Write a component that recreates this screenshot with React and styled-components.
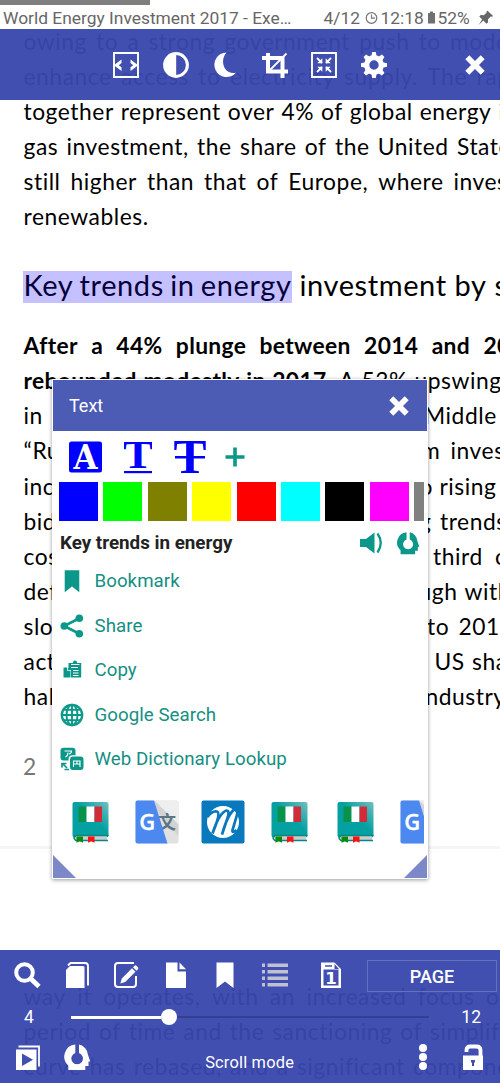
import React from 'react';
import styled, { createGlobalStyle } from 'styled-components';

const TEAL = '#0b988a';

const GlobalStyle = createGlobalStyle`
  * { box-sizing: border-box; }
  body { margin: 0; background: #fff; font-family: Roboto, sans-serif; overflow: hidden; }
  svg { display: block; flex: none; }
`;

const Screen = styled.main`
  position: relative;
  width: 500px;
  height: 1083px;
  overflow: hidden;
  background: #fff;
`;

/* Status strip */
const StatusBar = styled.header`
  position: relative;
  z-index: 1;
  height: 29px;
  background: #fff;
  color: #666;
`;
const ReadingProgress = styled.div`
  width: 150px;
  height: 5px;
  background: #7f7f7f;
`;
const StatusRow = styled.div`
  display: flex;
  align-items: center;
  height: 24px;
  padding: 2px 0 0 3px;
  font-size: 17.4px;
  white-space: nowrap;
`;
const StatusTitle = styled.span`
  flex: none;
  width: 320.5px;
`;
const StatusItem = styled.span`
  flex: none;
  width: ${(p) => p.$w}px;
`;

/* Document page */
const Page = styled.article`
  margin-top: -5.4px;
  height: 825px;
  border-bottom: 3px solid #f5f5f5;
  font-family: Lato, 'Open Sans', sans-serif;
  font-size: 22.8px;
  letter-spacing: 0.55px;
  color: #000;
  overflow: hidden;
`;
const NextPage = styled.article`
  padding-top: 130px;
  font-family: Lato, 'Open Sans', sans-serif;
  font-size: 22.8px;
  letter-spacing: 0.55px;
`;
const Row = styled.div`
  display: flex;
  height: 35.1px;
  line-height: 35.1px;
  padding-left: 23.5px;
  white-space: nowrap;
`;
const Words = styled.div`
  display: flex;
  flex: none;
  justify-content: space-between;
  width: ${(p) => p.$w}px;
`;
const Word = styled.span`
  font-weight: ${(p) => (p.$bold ? 700 : 400)};
  letter-spacing: ${(p) => (p.$bold ? 0.35 : 0.55)}px;
`;
const EdgeWord = styled(Word)`
  width: 0;
`;
const Heading = styled.h2`
  display: flex;
  height: 32px;
  margin: 37px 0 25px;
  padding-left: 22.5px;
  font-weight: 400;
  font-size: 29px;
  line-height: 28.5px;
  letter-spacing: 0.6px;
  white-space: nowrap;
`;
const Highlight = styled.mark`
  display: flex;
  justify-content: space-between;
  width: 269px;
  padding: 0 0 0 1px;
  background: #c5c0ff;
  color: #06003a;
`;
const HeadingRest = styled.span`
  display: flex;
  justify-content: space-between;
  width: 203px;
  padding-left: 8px;
`;
const PageNumber = styled.div`
  padding: 38px 0 0 23px;
  color: #777;
`;

/* Floating bars */
const TopToolbar = styled.nav`
  position: absolute;
  z-index: 2;
  left: 0;
  top: 29px;
  width: 500px;
  height: 71px;
  display: flex;
  align-items: center;
  justify-content: space-between;
  padding: 0 13.5px 0 112px;
  background: rgba(56, 71, 172, 0.955);
`;
const ToolGroup = styled.div`
  display: flex;
  gap: 21.6px;
`;
const BottomPanel = styled.footer`
  position: absolute;
  z-index: 2;
  left: 0;
  bottom: 0;
  width: 500px;
  height: 133px;
  background: rgba(56, 71, 172, 0.955);
  color: #fff;
`;
const BottomTools = styled.div`
  display: flex;
  align-items: center;
  justify-content: space-between;
  height: 52px;
  padding: 0 3px 0 13px;
`;
const BottomIcons = styled(ToolGroup)`
  padding-bottom: 2px;
`;
const PageButton = styled.button`
  width: 130px;
  height: 32px;
  padding: 0;
  border: 1px solid #6571bd;
  background: transparent;
  color: #fff;
  font: 500 18px Roboto, sans-serif;
`;
const SeekRow = styled.div`
  display: flex;
  align-items: center;
  height: 30px;
  padding: 0 19px 0 24px;
  font-size: 17.5px;
`;
const PageLabel = styled.span`
  width: ${(p) => p.$w}px;
  text-align: ${(p) => p.$align || 'left'};
`;
const Track = styled.div`
  display: flex;
  align-items: center;
  width: 358px;
`;
const TrackDone = styled.div`
  width: 89.5px;
  height: 3px;
  background: #fff;
`;
const Thumb = styled.div`
  width: 16px;
  height: 16px;
  border-radius: 50%;
  background: #fff;
`;
const TrackLeft = styled.div`
  flex: 1;
  height: 2.5px;
  background: #343f8f;
`;
const ModeRow = styled.div`
  display: flex;
  align-items: flex-start;
  height: 51px;
  padding: 11px 13.5px 0 13.5px;
`;
const ModeLabel = styled.span`
  flex: 1;
  padding-top: 10px;
  text-align: center;
  font-size: 16.4px;
  letter-spacing: 0.2px;
`;
const Spaced = styled.span`
  margin-left: ${(p) => p.$l || 0}px;
`;

/* Selection popup */
const Popup = styled.section`
  position: absolute;
  z-index: 3;
  left: 52px;
  top: 379px;
  width: 376px;
  height: 500px;
  padding: 1px;
  background: #fff;
  box-shadow: 0 1px 4px rgba(0, 0, 0, 0.4);
  display: flex;
  flex-direction: column;
`;
const PopupHeader = styled.div`
  display: flex;
  align-items: center;
  justify-content: space-between;
  flex: none;
  height: 51px;
  padding: 0 15.7px 0 16px;
  background: #4c5cb4;
  color: #fff;
  font-size: 18px;
`;
const StyleRow = styled.div`
  display: flex;
  align-items: center;
  height: 51px;
  padding-left: 16px;
`;
const SwatchRow = styled.div`
  display: flex;
  gap: 5.4px;
  width: 371px;
  height: 39px;
  padding-left: 6px;
  overflow: hidden;
`;
const Swatch = styled.span`
  flex: none;
  width: 39px;
  height: 39px;
  background: ${(p) => p.$color};
`;
const SelectionRow = styled.div`
  display: flex;
  align-items: center;
  height: 44px;
  padding: 0 7px 0 7px;
  color: #222;
  font-size: 18.8px;
  font-weight: 700;
`;
const SelectedText = styled.span`
  flex: 1;
`;
const ActionList = styled.ul`
  list-style: none;
  margin: -6px 0 0;
  padding: 0 0 0 7px;
`;
const Action = styled.li`
  display: flex;
  align-items: center;
  gap: 10.5px;
  height: 44.5px;
  color: #158f83;
  font-size: 18.7px;
  letter-spacing: 0.05px;
`;
const AppRow = styled.div`
  display: flex;
  gap: 22.2px;
  width: 371px;
  margin-top: 18px;
  padding-left: 16px;
  overflow: hidden;
`;
const Grips = styled.div`
  display: flex;
  justify-content: space-between;
  margin-top: auto;
`;
const Grip = styled.span`
  width: 23px;
  height: 23px;
  background: #7c88c7;
  clip-path: ${(p) => (p.$right ? 'polygon(100% 0, 100% 100%, 0 100%)' : 'polygon(0 0, 100% 100%, 0 100%)')};
`;

const Icon = ({ size = 28, w, h, box = 28, color = '#fff', children }) => (
  <svg width={w || size} height={h || size} viewBox={`0 0 ${w && h ? `${w} ${h}` : `${box} ${box}`}`} fill={color} color={color}>
    {children}
  </svg>
);

const CloseIcon = () => (
  <Icon size={24} box={24}>
    <path d="M4.300 4.300 19.700 19.700M19.700 4.300 4.300 19.700" stroke="#fff" strokeWidth="5.600" />
  </Icon>
);
const FitWidthIcon = () => (
  <Icon>
    <path d="M2 2h24v24H2z" fill="none" stroke="#fff" strokeWidth="1.900" />
    <path d="M9.500 8.500v3.600L6.800 14.200l2.700 2.100v3.600L2.800 14.900v-1.400zM18.500 8.500l6.700 5v1.400l-6.700 5v-3.600l2.700-2.100-2.700-2.100z" />
  </Icon>
);
const ContrastIcon = () => (
  <Icon>
    <circle cx="14" cy="14" r="11.400" fill="none" stroke="#fff" strokeWidth="3" />
    <path d="M14.200 2v24A12 12 0 0 1 14.200 2z" />
  </Icon>
);
const MoonIcon = () => (
  <Icon>
    <path d="M15.500 1.500A12.300 12.300 0 1 0 25 21.800C12.500 24.200 8.500 9 15.500 1.500z" />
  </Icon>
);
const CropIcon = () => (
  <Icon>
    <path d="M7 2v18.500h20M1 7h20.500v20" fill="none" stroke="#fff" strokeWidth="4" />
    <path d="M8 20 25.500 2.500" stroke="#fff" strokeWidth="1.800" />
  </Icon>
);
const ShrinkIcon = () => (
  <Icon>
    <path d="M2 2h24v24H2z" fill="none" stroke="#fff" strokeWidth="1.900" />
    <path d="M7 7l5 5M21 7l-5 5M7 21l5-5M21 21l-5-5" stroke="#fff" strokeWidth="1.800" />
    <path d="M12.300 7.300v5H7.300zM15.700 7.300v5h5zM12.300 20.700v-5h-5zM15.700 20.700v-5h5z" />
  </Icon>
);
const GearIcon = () => (
  <Icon>
    <circle cx="14" cy="14" r="7.300" fill="none" stroke="#fff" strokeWidth="5.200" />
    {[0, 45, 90, 135, 180, 225, 270, 315].map((a) => (
      <path key={a} d="M11.300 5.500 12.200 1h3.600l.9 4.500z" transform={`rotate(${a} 14 14)`} />
    ))}
  </Icon>
);

const SearchIcon = () => (
  <Icon>
    <circle cx="11.500" cy="11.500" r="8.300" fill="none" stroke="#fff" strokeWidth="4" />
    <path d="m17.500 17.500 8.500 8" stroke="#fff" strokeWidth="4.800" />
  </Icon>
);
const PagesIcon = () => (
  <Icon>
    <path d="M7 5h13q1.500 0 1.500 1.500V27H3V9z" />
    <path d="M5 4.500 7.500 2H22q3 0 3 3v19.500" fill="none" stroke="#fff" strokeWidth="1.900" />
  </Icon>
);
const EditIcon = () => (
  <Icon>
    <path d="M22 2H6Q3 2 3 5v18q0 3 3 3h15q3 0 3-3v-8" fill="none" stroke="#fff" strokeWidth="2" />
    <path d="M8.300 22.500l1.500-5L20 7.200l3.500 3.500L13.200 21zM21 6.200l1.500-1.500q1-.8 2 0l1.500 1.500q.8 1 0 2L24.500 9.700z" />
  </Icon>
);
const PageIcon = () => (
  <Icon>
    <path d="M4 1.500h11.500v9H24V27H4z" />
    <path d="M17.500 1.500 24 8.200h-6.500z" />
  </Icon>
);
const BookmarkIcon = ({ color, size }) => (
  <Icon color={color} size={size}>
    <path d="M5.500 1.500h17V27L14 20.500 5.500 27z" />
  </Icon>
);
const ListIcon = () => (
  <Icon color="#bfc1d3">
    <path d="M1 2.500h3v3.500H1zM6.500 2.500H27v3.500H6.500zM1 9h3v3.500H1zM6.500 9H27v3.500H6.500zM1 15.500h3V19H1zM6.500 15.500H27V19H6.500zM1 22h3v3.500H1zM6.500 22H27v3.500H6.500z" />
  </Icon>
);
const PageOneIcon = () => (
  <Icon>
    <path fillRule="evenodd" d="M4 1.500h13.500l6.500 6.500v19H4zM6.500 8.500v16h15v-16zM8 4.300v1.400h7V4.300zM17.500 3v5H22z" />
    <text x="14" y="22.500" textAnchor="middle" fontFamily="DejaVu Sans" fontWeight="700" fontSize="16.500">1</text>
  </Icon>
);
const SlidesIcon = () => (
  <Icon>
    <path fillRule="evenodd" d="M2 6.500h20.500V27H2zM8 10.500v12.500l11-6.200z" />
    <path d="M4.500 3.500H25v20" fill="none" stroke="#fff" strokeWidth="1.800" />
  </Icon>
);
const HeadphoneIcon = ({ color = '#fff', size = 28 }) => (
  <Icon color={color} size={size}>
    <path fillRule="evenodd" d="M12.300 1.600A12 12 0 0 0 5.300 22.500V27h17v-4h3.200v-4.500h1.800l-2.300-6.500A11.300 11.300 0 0 0 16 1.600V10a5.800 5.800 0 1 1-3.700 0z" />
  </Icon>
);
const DotsIcon = () => (
  <Icon>
    <circle cx="14" cy="5" r="4" />
    <circle cx="14" cy="14" r="4" />
    <circle cx="14" cy="23" r="4" />
  </Icon>
);
const UnlockIcon = () => (
  <Icon>
    <path d="M7.500 9V7q0-3.500 3.500-3.500h6.500q4 0 4 4V14" fill="none" stroke="#fff" strokeWidth="3.800" />
    <path fillRule="evenodd" d="M4 12.500h20V27H4zM12 17h4v2.500h-1V23h-2v-3.500h-1z" />
  </Icon>
);

const ClockIcon = () => (
  <Icon w={16} h={17} color="#777">
    <circle cx="6.500" cy="8" r="5.300" fill="none" stroke="#777" strokeWidth="1.200" />
    <path d="M6.500 4.500V8.200H10" fill="none" stroke="#777" strokeWidth="1.200" />
  </Icon>
);
const BatteryIcon = () => (
  <Icon w={11} h={16} color="#707070">
    <path d="M3 1.500h3V3H8v10.500H1V3h2z" />
  </Icon>
);
const PinIcon = () => (
  <Icon w={18} h={18} color="#666">
    <path d="m9.500 1.700 5.700 5.400-1.500.7-1-.2-2.800 2.900.2 2.800-1.700 1.500-3.100-3.200-4.700 4.500 3.500-5.700-2.800-3 1.500-1.300 3.100.2 2.800-2.900-.3-1z" />
  </Icon>
);

const LetterBoxIcon = () => (
  <svg width="33" height="32" viewBox="0 0 33 32">
    <rect width="33" height="31" y=".5" rx="2.500" fill="#00f" />
    <text x="16.500" y="27.500" textAnchor="middle" textLength="24" lengthAdjust="spacingAndGlyphs" fontFamily="DejaVu Serif" fontWeight="700" fontSize="34" fill="#fff">A</text>
  </svg>
);
const UnderlineIcon = () => (
  <svg width="28" height="34" viewBox="0 0 28 34">
    <text x="14" y="28" textAnchor="middle" textLength="30" lengthAdjust="spacingAndGlyphs" fontFamily="Liberation Serif" fontWeight="700" fontSize="41" fill="#00f">T</text>
    <path d="M0 31h28v2.200H0z" fill="#00f" />
  </svg>
);
const StrikeIcon = () => (
  <svg width="32" height="34" viewBox="0 0 32 34">
    <text x="16" y="33" textAnchor="middle" textLength="33" lengthAdjust="spacingAndGlyphs" fontFamily="Liberation Serif" fontWeight="700" fontSize="49" fill="#00f">T</text>
    <path d="M1 16h30v2.500H1z" fill="#00f" />
  </svg>
);
const PlusIcon = () => (
  <svg width="20" height="20" viewBox="0 0 20 20">
    <path d="M10 .5v19M.5 10h19" stroke={TEAL} strokeWidth="3.600" />
  </svg>
);
const SpeakerIcon = () => (
  <Icon w={23} h={22} color={TEAL}>
    <path d="M0 7h6l8.500-6.500v21L6 15H0z" />
    <path d="M17.500 1.500q6.500 9.500 0 19" fill="none" stroke={TEAL} strokeWidth="2.300" />
  </Icon>
);
const ShareIcon = () => (
  <Icon size={24} box={24} color={TEAL}>
    <path d="M19 4.500 4 12l15 7.500" fill="none" stroke={TEAL} strokeWidth="2.600" />
    <circle cx="19.300" cy="4.300" r="3.800" />
    <circle cx="4.300" cy="12" r="3.800" />
    <circle cx="19.300" cy="19.700" r="3.800" />
  </Icon>
);
const PasteIcon = () => (
  <Icon size={24} box={24} color={TEAL}>
    <path d="M8.500 5h4.300q0-2.500 2.200-2.500T17.200 5h4v14.500H11V12H8.500z" />
    <path d="M11 6.500h8.500" stroke="#fff" strokeWidth="1" />
    <path d="M11 9.500h7M13 12.500h5.500M13 15h5.500M13 17.500h5.500" stroke="#fff" strokeWidth="1.200" />
    <path d="M3.500 9.500h3.700v3.200h3.300v6.800h-7zM8 9.500l3 2.500H8z" />
  </Icon>
);
const GlobeIcon = () => (
  <Icon size={24} box={24} color={TEAL}>
    <circle cx="12" cy="12" r="10.200" fill="none" stroke={TEAL} strokeWidth="2.300" />
    <ellipse cx="12" cy="12" rx="5.500" ry="10.200" fill="none" stroke={TEAL} strokeWidth="1.900" />
    <path d="M12 1v22M1 12h22M3 6.800h18M3 17.200h18" stroke={TEAL} strokeWidth="1.900" />
  </Icon>
);
const DictionaryIcon = () => (
  <Icon size={24} box={24} color={TEAL}>
    <path d="M3.500.7h9q3 0 3 3v4.500h-3q-4 0-4 4v1.300h-5q-3 0-3-3v-6.800q0-3 3-3z" />
    <rect x="10" y="9.500" width="13.500" height="13.500" rx="3" />
    <path d="M4.500 4h7q0 2.500-2.500 3M8 5.500Q8 9 5.500 10M13.500 20v-6h6.500V20M13.500 17h6.500M17 14V17" fill="none" stroke="#fff" strokeWidth="1.100" />
    <path d="m2.500 16.500 4.500 4.500M2 20.500v-4h4.500M9 22.500H4.500" fill="none" stroke={TEAL} strokeWidth="1.700" />
  </Icon>
);

const ItalianDictionary = () => (
  <svg width="44" height="44" viewBox="1 0 44 44">
    <defs>
      <linearGradient id="cover" x1="0" y1="1" x2="1" y2="0">
        <stop offset=".55" stopColor="#05a0a2" />
        <stop offset="1" stopColor="#70bfc0" />
      </linearGradient>
    </defs>
    <rect x="4.500" y="2" width="36" height="35.500" rx="2" fill="url(#cover)" />
    <path d="M8 36h31v4.500H8q-3-2 0-4.500z" fill="#ccc" />
    <path d="M40.500 35.500H8q-4 2.500 0 5h32" fill="none" stroke="#078685" strokeWidth="1.500" />
    <path d="M10.500 6.500h8v15.500h-8z" fill="#09924a" />
    <path d="M18.500 6.500h8v15.500h-8z" fill="#fff" />
    <path d="M26.500 6.500h7.500v15.500h-7.500z" fill="#d12c38" />
    <path d="M8.500 36.500H15v6.300l-3.200-1.600-3.300 1.600z" fill="#0a8a0a" />
    <path d="M20 36.500h6.500v6.300l-3.200-1.600-3.300 1.600z" fill="#f11" />
  </svg>
);
const TranslateLogo = () => (
  <svg width="44" height="44" viewBox="0 0 44 44">
    <rect x=".5" y=".5" width="43" height="43" rx="2" fill="#e1e1e1" />
    <path d="m20 1 23.500 23.500V1z" fill="#eee" />
    <path d="m20 1 23.500 23.500V36L22 11z" fill="#d3d3d3" />
    <text x="23" y="28.500" fontFamily="Noto Sans CJK SC, sans-serif" fontWeight="700" fontSize="18" fill="#5b7684">文</text>
    <path d="M2.500.5h16.500l13.500 43h-30q-2 0-2-2v-39q0-2 2-2z" fill="#4b88ef" />
    <text x="4.300" y="29.500" fontFamily="Open Sans" fontWeight="600" fontSize="22" fill="#fff" stroke="#fff" strokeWidth=".3">G</text>
  </svg>
);
const MerriamLogo = () => (
  <svg width="44" height="44" viewBox="0 0 44 44">
    <rect x=".5" y=".5" width="43" height="43" rx="2" fill="#0879bd" />
    <circle cx="22" cy="22" r="16" fill="#fff" />
    <path d="M6.500 17Q11 10.500 16 11.500q3 1-.5 11.500l-4 10.500Q18 13 25.500 10.500q3.500 0 1 7.500L21 34.500Q27 13 34.500 8.500q3 0 1.500 6.500l-4.500 15q-.5 4 4 0" fill="none" stroke="#0879bd" strokeWidth="2.700" />
  </svg>
);

/* A justified text line: the last word begins at the given width and runs off the sheet. */
const Line = ({ text, w, bold = 0 }) => {
  const words = text.split(' ');
  return (
    <Row>
      <Words $w={w}>
        {words.map((word, i) => {
          const Tag = i === words.length - 1 ? EdgeWord : Word;
          return <Tag key={i} $bold={i < bold}>{word}</Tag>;
        })}
      </Words>
    </Row>
  );
};
/* A line interrupted by the popup: its start, then the words that resume at `at`. */
const SplitLine = ({ start, rest, at, w }) => (
  <Row>
    <Words $w={at - 23.5}><Word>{start}</Word></Words>
    <Words $w={w}>
      {rest.split(' ').map((word, i, all) => {
        const Tag = i && i === all.length - 1 ? EdgeWord : Word;
        return <Tag key={i}>{word}</Tag>;
      })}
    </Words>
  </Row>
);

const swatches = ['#0000ff', '#00ff00', '#808000', '#ffff00', '#ff0000', '#00ffff', '#000000', '#ff00ff', '#808080'];
const actions = [
  ['Bookmark', <BookmarkIcon color={TEAL} size={24} />],
  ['Share', <ShareIcon />],
  ['Copy', <PasteIcon />],
  ['Google Search', <GlobeIcon />],
  ['Web Dictionary Lookup', <DictionaryIcon />],
];

export default function App() {
  return (
    <Screen>
      <GlobalStyle />
      <StatusBar>
        <ReadingProgress />
        <StatusRow>
          <StatusTitle>World Energy Investment 2017 - Exe…</StatusTitle>
          <StatusItem $w={41}>4/12</StatusItem>
          <ClockIcon />
          <StatusItem $w={46}>12:18</StatusItem>
          <BatteryIcon />
          <StatusItem $w={40}>52%</StatusItem>
          <PinIcon />
        </StatusRow>
      </StatusBar>

      <Page>
        <Line text="owing to a strong government push to modernise" w={426.5} />
        <Line text="enhance access to electricity supply. The rapid" w={453} />
        <Line text="together represent over 4% of global energy in" w={475} />
        <Line text="gas investment, the share of the United States" w={433.5} />
        <Line text="still higher than that of Europe, where investment" w={430} />
        <Row>renewables.</Row>
        <Heading>
          <Highlight><span>Key</span><span>trends</span><span>in</span><span>energy</span></Highlight>
          <HeadingRest><span>investment</span><span>by</span><EdgeWord>sector</EdgeWord></HeadingRest>
        </Heading>
        <Line text="After a 44% plunge between 2014 and 2016" w={460} bold={8} />
        <Line text="rebounded modestly in 2017. A 53% upswing" w={391} bold={4} />
        <SplitLine start="in" rest="Middle East" at={424} w={82} />
        <SplitLine start="“Ru" rest="m investment" at={421} w={29.5} />
        <SplitLine start="inc" rest="o rising" at={419.5} w={20} />
        <SplitLine start="bid" rest="g trends" at={419} w={21} />
        <SplitLine start="cos" rest="third of" at={433} w={62} />
        <SplitLine start="def" rest="ugh with" at={418.5} w={46} />
        <SplitLine start="slo" rest="to 2015" at={427} w={31.5} />
        <SplitLine start="act" rest="US shale" at={434.5} w={37.5} />
        <SplitLine start="hal" rest="ndustry" at={425.5} w={80} />
        <PageNumber>2</PageNumber>
      </Page>
      <NextPage>
        <Line text="way it operates, with an increased focus on" w={462.5} />
        <Line text="period of time and the sanctioning of simplified" w={406.5} />
        <Line text="curve has rebased, and a significant component" w={389.5} />
      </NextPage>

      <TopToolbar>
        <ToolGroup>
          <FitWidthIcon /><ContrastIcon /><MoonIcon /><CropIcon /><ShrinkIcon /><GearIcon />
        </ToolGroup>
        <CloseIcon />
      </TopToolbar>

      <Popup>
        <PopupHeader>Text<CloseIcon /></PopupHeader>
        <StyleRow>
          <LetterBoxIcon />
          <Spaced $l={22}><UnderlineIcon /></Spaced>
          <Spaced $l={22}><StrikeIcon /></Spaced>
          <Spaced $l={19}><PlusIcon /></Spaced>
        </StyleRow>
        <SwatchRow>{swatches.map((c) => <Swatch key={c} $color={c} />)}</SwatchRow>
        <SelectionRow>
          <SelectedText>Key trends in energy</SelectedText>
          <SpeakerIcon />
          <Spaced $l={13}><HeadphoneIcon color={TEAL} size={24} /></Spaced>
        </SelectionRow>
        <ActionList>
          {actions.map(([label, icon]) => <Action key={label}>{icon}{label}</Action>)}
        </ActionList>
        <AppRow>
          <ItalianDictionary /><TranslateLogo /><MerriamLogo /><ItalianDictionary /><ItalianDictionary /><TranslateLogo />
        </AppRow>
        <Grips><Grip /><Grip $right /></Grips>
      </Popup>

      <BottomPanel>
        <BottomTools>
          <BottomIcons>
            <SearchIcon /><PagesIcon /><EditIcon /><PageIcon /><BookmarkIcon /><ListIcon />
            <Spaced $l={6}><PageOneIcon /></Spaced>
          </BottomIcons>
          <PageButton>PAGE</PageButton>
        </BottomTools>
        <SeekRow>
          <PageLabel $w={47}>4</PageLabel>
          <Track><TrackDone /><Thumb /><TrackLeft /></Track>
          <PageLabel $w={52} $align="right">12</PageLabel>
        </SeekRow>
        <ModeRow>
          <SlidesIcon />
          <Spaced $l={21}><HeadphoneIcon /></Spaced>
          <ModeLabel>Scroll mode</ModeLabel>
          <DotsIcon />
          <Spaced $l={21.8}><UnlockIcon /></Spaced>
        </ModeRow>
      </BottomPanel>
    </Screen>
  );
}
